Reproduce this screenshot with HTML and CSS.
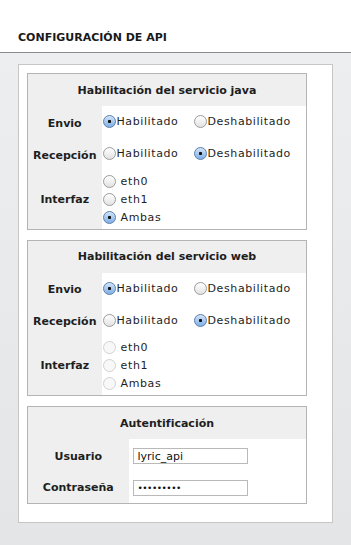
FILE: index.html
```html
<!DOCTYPE html>
<html lang="es">
<head>
    <meta charset="UTF-8">
    <meta name="viewport" content="width=device-width, initial-scale=1.0">
    <title>Configuración de API</title>
    <link rel="stylesheet" href="styles.css">
</head>
<body>
    <div class="page-title">CONFIGURACIÓN DE API</div>

    <div class="content">
        <form class="settings" id="apiForm">
            <table class="panel">
                <tr><th colspan="2">Habilitación del servicio java</th></tr>
                <tr>
                    <td class="label">Envio</td>
                    <td class="value">
                        <label class="option"><input type="radio" name="java_send" checked>Habilitado</label>
                        <label class="option"><input type="radio" name="java_send">Deshabilitado</label>
                    </td>
                </tr>
                <tr>
                    <td class="label">Recepción</td>
                    <td class="value">
                        <label class="option"><input type="radio" name="java_recv">Habilitado</label>
                        <label class="option"><input type="radio" name="java_recv" checked>Deshabilitado</label>
                    </td>
                </tr>
                <tr class="iface">
                    <td class="label">Interfaz</td>
                    <td class="value">
                        <label class="line"><input type="radio" name="java_if"> eth0</label>
                        <label class="line"><input type="radio" name="java_if"> eth1</label>
                        <label class="line"><input type="radio" name="java_if" checked> Ambas</label>
                    </td>
                </tr>
            </table>

            <table class="panel">
                <tr><th colspan="2">Habilitación del servicio web</th></tr>
                <tr>
                    <td class="label">Envio</td>
                    <td class="value">
                        <label class="option"><input type="radio" name="web_send" checked>Habilitado</label>
                        <label class="option"><input type="radio" name="web_send">Deshabilitado</label>
                    </td>
                </tr>
                <tr>
                    <td class="label">Recepción</td>
                    <td class="value">
                        <label class="option"><input type="radio" name="web_recv">Habilitado</label>
                        <label class="option"><input type="radio" name="web_recv" checked>Deshabilitado</label>
                    </td>
                </tr>
                <tr class="iface">
                    <td class="label">Interfaz</td>
                    <td class="value">
                        <label class="line"><input type="radio" name="web_if" disabled> eth0</label>
                        <label class="line"><input type="radio" name="web_if" disabled> eth1</label>
                        <label class="line"><input type="radio" name="web_if" disabled> Ambas</label>
                    </td>
                </tr>
            </table>

            <table class="panel auth">
                <tr><th colspan="2">Autentificación</th></tr>
                <tr>
                    <td class="label">Usuario</td>
                    <td class="value"><input type="text" class="field" value="lyric_api"></td>
                </tr>
                <tr>
                    <td class="label">Contraseña</td>
                    <td class="value"><input type="password" class="field secret" value="123456789"></td>
                </tr>
            </table>
        </form>
    </div>
</body>
</html>
```

FILE: styles.css
```css
body {
    font-family: "DejaVu Sans", Verdana, sans-serif;
    font-size: 11px;
    margin: 0;
    padding: 0;
    color: #1e1e1e;
    background: linear-gradient(to bottom, #eeeff0, #e4e5e7);
    min-height: 545px;
}

.page-title {
    background-color: #ffffff;
    font-weight: bold;
    line-height: 14px;
    padding: 31px 0 7px 18px;
    border-bottom: 1px solid #8c8c8c;
    color: #1a1a1a;
}

.content {
    padding: 11px 18px 0 18px;
}

.settings {
    background-color: #ffffff;
    border: 1px solid #c6c6c6;
    padding: 8px 8px 18px 8px;
}

.panel {
    width: 280px;
    border-collapse: collapse;
    border: 1px solid #b4b4b4;
    margin-bottom: 10px;
}

.panel:last-child {
    margin-bottom: 0;
}

.panel th {
    height: 32px;
    padding: 0;
    background-color: #efefef;
    font-weight: bold;
    text-align: center;
}

.panel td {
    height: 32px;
    padding: 2px 0 0 0;
    box-sizing: border-box;
}

.panel .label {
    width: 74px;
    background-color: #efefef;
    font-weight: bold;
    text-align: center;
}

.panel.auth .label {
    width: 101px;
}

.panel .value {
    background-color: #ffffff;
    padding-left: 1px;
    white-space: nowrap;
    letter-spacing: 0.6px;
}

.panel tr.iface td {
    height: 59px;
    padding-top: 0;
}

.option {
    display: inline-flex;
    align-items: center;
    margin-right: 11px;
}

.line {
    display: flex;
    align-items: center;
    height: 18px;
    white-space: pre;
}

input[type="radio"] {
    appearance: none;
    -webkit-appearance: none;
    width: 13px;
    height: 13px;
    margin: 0 1px 0 0;
    border-radius: 50%;
    border: 1px solid #9c9c9c;
    background: linear-gradient(#ffffff, #e2e2e2);
    box-sizing: border-box;
}

input[type="radio"]:checked {
    border-color: #5f82ad;
    background: radial-gradient(circle, #111111 0 1.3px, transparent 1.9px),
                linear-gradient(#d4e5f8, #7eaee6);
}

input[type="radio"]:disabled {
    border-color: #d2d2d2;
    background: #f8f8f8;
}

.field {
    width: 115px;
    height: 16px;
    margin-left: 3px;
    padding: 0 4px;
    border: 1px solid #b9b9b9;
    box-sizing: border-box;
    font-family: "DejaVu Sans", Verdana, sans-serif;
    font-size: 11px;
    letter-spacing: 0;
    color: #111111;
}

.field.secret {
    font-size: 9px;
    letter-spacing: -0.5px;
}
```
